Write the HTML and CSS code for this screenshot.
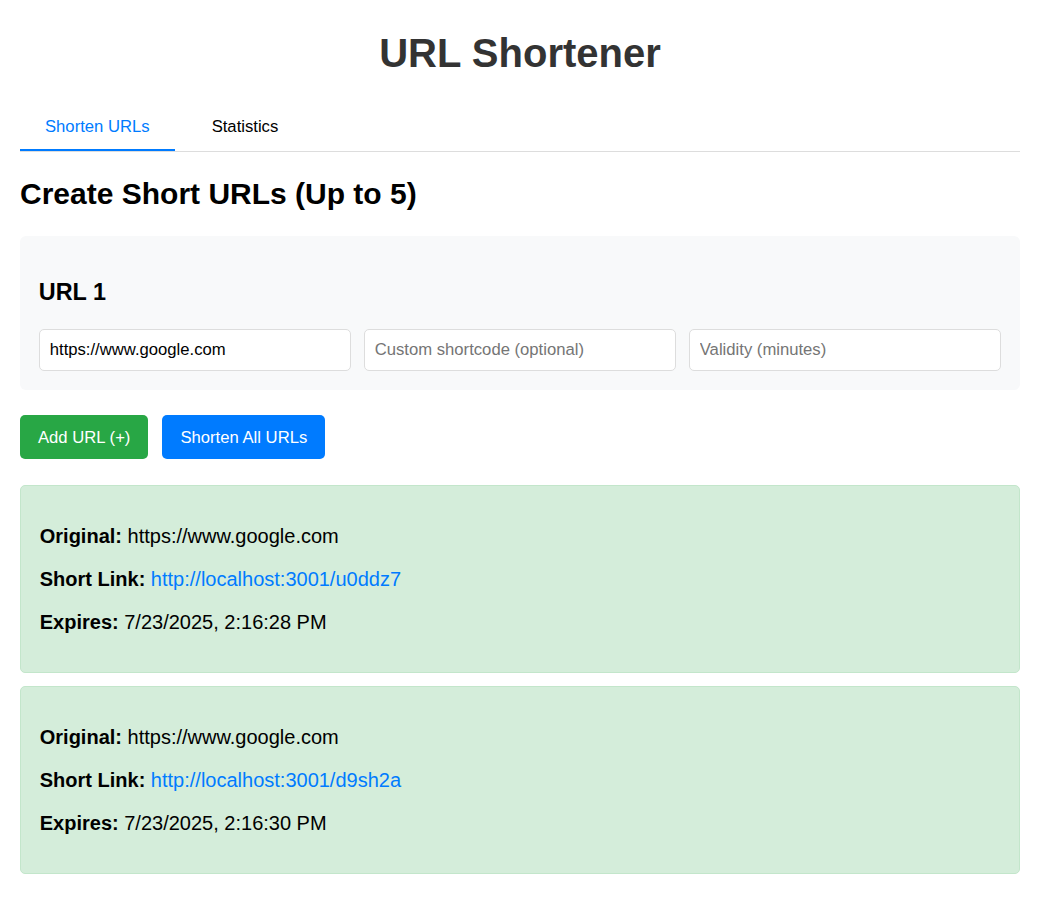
FILE: index.html
```html
<!DOCTYPE html>
<html lang="en">
<head>
<meta charset="utf-8">
<title>URL Shortener</title>
<link rel="stylesheet" href="styles.css">
</head>
<body>
<div class="app">
  <h1 class="title">URL Shortener</h1>
  <div class="tabs">
    <button class="tab active">Shorten URLs</button>
    <button class="tab">Statistics</button>
  </div>
  <h2 class="section-title">Create Short URLs (Up to 5)</h2>
  <div class="url-card">
    <h3 class="url-label">URL 1</h3>
    <div class="fields">
      <input class="field" type="text" value="https://www.google.com">
      <input class="field" type="text" placeholder="Custom shortcode (optional)">
      <input class="field" type="text" placeholder="Validity (minutes)">
    </div>
  </div>
  <div class="actions">
    <button class="btn btn-green">Add URL (+)</button>
    <button class="btn btn-blue">Shorten All URLs</button>
  </div>
  <div class="result">
    <p class="result-line"><strong>Original:</strong> https://www.google.com</p>
    <p class="result-line"><strong>Short Link:</strong> <a class="link" href="#">http://localhost:3001/u0ddz7</a></p>
    <p class="result-line"><strong>Expires:</strong> 7/23/2025, 2:16:28 PM</p>
  </div>
  <div class="result">
    <p class="result-line"><strong>Original:</strong> https://www.google.com</p>
    <p class="result-line"><strong>Short Link:</strong> <a class="link" href="#">http://localhost:3001/d9sh2a</a></p>
    <p class="result-line"><strong>Expires:</strong> 7/23/2025, 2:16:30 PM</p>
  </div>
</div>
</body>
</html>
```
FILE: styles.css
```css
* { box-sizing: border-box; }

body {
  margin: 0;
  background: #fff;
  font-family: "Liberation Sans", Arial, sans-serif;
  color: #000;
}

.app {
  max-width: 1040px;
  margin: 0 auto;
  padding: 30px 20px 20px;
}

.title {
  margin: 0 0 29px;
  font-size: 40px;
  line-height: 46px;
  font-weight: 700;
  color: #333;
  text-align: center;
}

.tabs {
  display: flex;
  gap: 12px;
  border-bottom: 1px solid #ddd;
}

.tab {
  font-family: inherit;
  font-size: 16.67px;
  line-height: 19px;
  padding: 12px 25px 13px;
  background: none;
  border: none;
  border-bottom: 2.5px solid transparent;
  color: #000;
  cursor: pointer;
}

.tab.active {
  color: #007bff;
  border-bottom-color: #007bff;
}

.section-title {
  margin: 25px 0 25px;
  font-size: 30px;
  line-height: 34px;
  font-weight: 700;
}

.url-card {
  background: #f8f9fa;
  border-radius: 6px;
  padding: 19px 18.75px;
  margin-bottom: 25px;
}

.url-label {
  margin: 24px 0 23.4px;
  font-size: 23.4px;
  line-height: 27px;
  font-weight: 700;
}

.fields {
  display: flex;
  gap: 12.5px;
}

.field {
  flex: 1;
  min-width: 0;
  height: 42px;
  padding: 10px;
  font-family: inherit;
  font-size: 16.67px;
  color: #000;
  background: #fff;
  border: 1.25px solid #ddd;
  border-radius: 5px;
  outline: none;
}

.field::placeholder {
  color: #757575;
}

.actions {
  display: flex;
  gap: 14px;
  margin-bottom: 26px;
}

.btn {
  font-family: inherit;
  font-size: 16.67px;
  line-height: 19px;
  padding: 12.5px 18px;
  border: none;
  border-radius: 5px;
  color: #fff;
  cursor: pointer;
}

.btn-green { background: #28a745; }
.btn-blue { background: #007bff; }

.result {
  background: #d4edda;
  border: 1.25px solid #c3e6cb;
  border-radius: 5px;
  padding: 18.5px 18.75px;
  margin-bottom: 13px;
}

.result-line {
  margin: 20px 0;
  font-size: 20px;
  line-height: 23px;
}

.link {
  color: #007bff;
  text-decoration: none;
}
```
